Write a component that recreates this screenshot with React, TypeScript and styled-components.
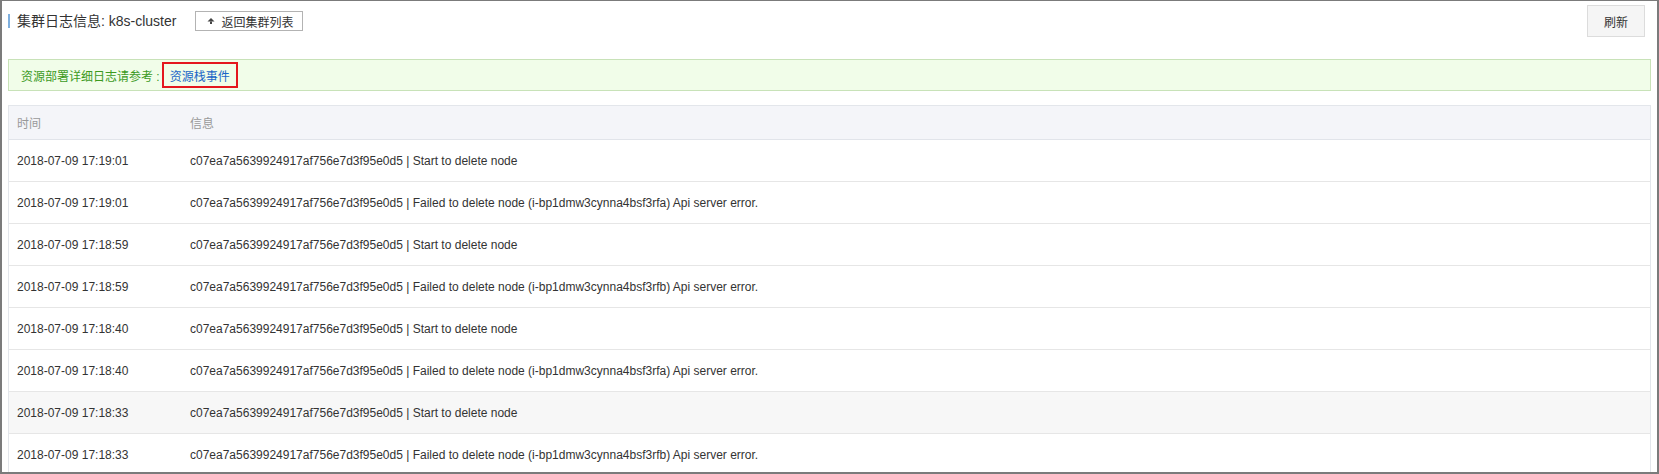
import React from "react";
import styled, { createGlobalStyle } from "styled-components";

const GlobalStyle = createGlobalStyle`
  html, body { margin: 0; padding: 0; background: #fff; }
  body { font-family: "Liberation Sans", Arial, "Noto Sans CJK SC", sans-serif; color: #333; }
  * { box-sizing: border-box; }
`;

const Frame = styled.div`
  width: 1659px;
  height: 474px;
  border: 2px solid #7b7b7b;
  border-top-width: 1px;
  padding: 4px 6px 0 6px;
  overflow: hidden;
  background: #fff;
`;

const Header = styled.div`
  display: flex;
  align-items: center;
  justify-content: space-between;
  height: 32px;
`;

const TitleGroup = styled.div`
  display: flex;
  align-items: center;
  gap: 19px;
`;

const Title = styled.h1`
  margin: 0;
  border-left: 2px solid #7fb0df;
  padding-left: 7px;
  font-size: 14px;
  line-height: 14px;
  font-weight: normal;
  color: #333;
`;

const BackButton = styled.button`
  display: flex;
  align-items: center;
  gap: 6px;
  height: 20px;
  padding: 0 9px 0 11px;
  border: 1px solid #b3b3b3;
  background: #fff;
  font-family: inherit;
  font-size: 12px;
  color: #333;
  cursor: pointer;
`;

const RefreshButton = styled.button`
  width: 58px;
  height: 32px;
  margin-right: 6px;
  border: 1px solid #dcdcdc;
  background: #f5f5f5;
  font-family: inherit;
  font-size: 12px;
  color: #333;
  cursor: pointer;
`;

const Alert = styled.div`
  display: flex;
  align-items: center;
  margin-top: 22px;
  height: 32px;
  padding-left: 12px;
  border: 1px solid #c8e2b8;
  background: #f1fde9;
  font-size: 12px;
  color: #3c9a1e;
  white-space: pre;
`;

const HighlightLink = styled.a`
  display: inline-flex;
  align-items: center;
  height: 26px;
  margin-left: 2px;
  padding: 0 6px;
  border: 2px solid #e4171f;
  color: #1a66c7;
  text-decoration: none;
  font-size: 12px;
`;

const Table = styled.div`
  margin-top: 14px;
  border: 1px solid #e3e6eb;
`;

const Row = styled.div<{ $head?: boolean; $hover?: boolean }>`
  display: flex;
  align-items: center;
  height: ${(p) => (p.$head ? "34px" : "42px")};
  border-bottom: 1px solid ${(p) => (p.$head ? "#e1e4ea" : "#e6e6e6")};
  background: ${(p) => (p.$head ? "#f4f5f9" : p.$hover ? "#f7f7f7" : "#fff")};
  color: ${(p) => (p.$head ? "#999" : "#333")};
  font-size: 12px;
`;

const TimeCell = styled.div`
  width: 173px;
  padding-left: 8px;
  flex-shrink: 0;
`;

const InfoCell = styled.div`
  flex: 1;
  padding-left: 8px;
  white-space: nowrap;
`;

const UpIcon = () => (
  <svg width="8" height="8" viewBox="0 0 8 8" fill="none">
    <path d="M4 1 L0.5 4.5 H7.5 Z" fill="#444" />
    <rect x="3" y="4.5" width="2" height="2.5" fill="#444" />
  </svg>
);

const hash = "c07ea7a5639924917af756e7d3f95e0d5";

const rows = [
  { t: "2018-07-09 17:19:01", m: "Start to delete node" },
  { t: "2018-07-09 17:19:01", m: "Failed to delete node (i-bp1dmw3cynna4bsf3rfa) Api server error." },
  { t: "2018-07-09 17:18:59", m: "Start to delete node" },
  { t: "2018-07-09 17:18:59", m: "Failed to delete node (i-bp1dmw3cynna4bsf3rfb) Api server error." },
  { t: "2018-07-09 17:18:40", m: "Start to delete node" },
  { t: "2018-07-09 17:18:40", m: "Failed to delete node (i-bp1dmw3cynna4bsf3rfa) Api server error." },
  { t: "2018-07-09 17:18:33", m: "Start to delete node", hover: true },
  { t: "2018-07-09 17:18:33", m: "Failed to delete node (i-bp1dmw3cynna4bsf3rfb) Api server error." },
];

export default function App() {
  return (
    <>
      <GlobalStyle />
      <Frame>
        <Header>
          <TitleGroup>
            <Title>集群日志信息: k8s-cluster</Title>
            <BackButton>
              <UpIcon />
              返回集群列表
            </BackButton>
          </TitleGroup>
          <RefreshButton>刷新</RefreshButton>
        </Header>
        <Alert>
          {"资源部署详细日志请参考 :"}
          <HighlightLink href="#">资源栈事件</HighlightLink>
        </Alert>
        <Table>
          <Row $head>
            <TimeCell>时间</TimeCell>
            <InfoCell>信息</InfoCell>
          </Row>
          {rows.map((r, i) => (
            <Row key={i} $hover={r.hover}>
              <TimeCell>{r.t}</TimeCell>
              <InfoCell>
                {hash} | {r.m}
              </InfoCell>
            </Row>
          ))}
        </Table>
      </Frame>
    </>
  );
}
